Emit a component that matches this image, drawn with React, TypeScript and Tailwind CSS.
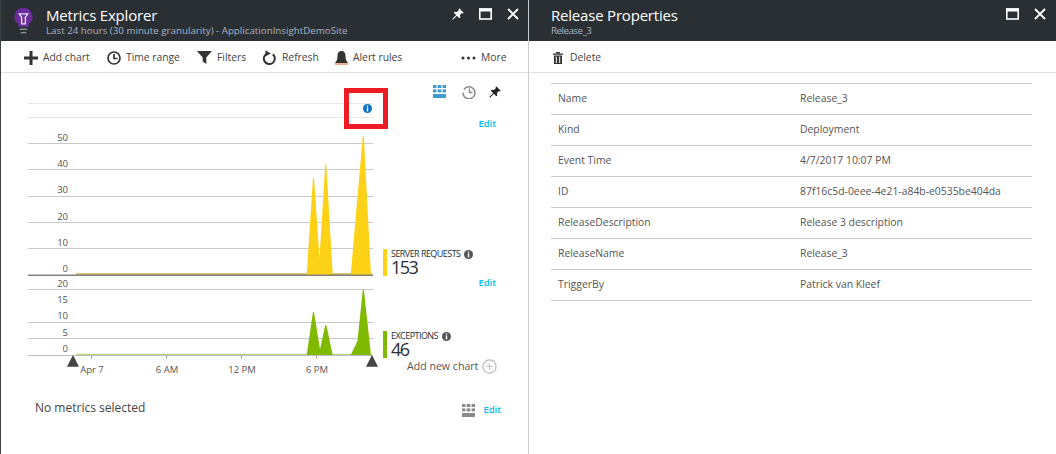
import React from "react";

function Pin({ color, className }: { color: string; className: string }) {
  return (
    <svg viewBox="0 0 12 12" className={className} fill={color}>
      <path d="M7.2 0.3 11.7 4.8 10.8 5.5 10 5 7.9 7.1 8.3 9.3 7.3 10.2 4.9 7.8 1 11.7 0.3 11 4.2 7.1 1.8 4.7 2.7 3.7 4.9 4.1 7 2 6.5 1.2z" />
    </svg>
  );
}

function Maximize() {
  return (
    <svg viewBox="0 0 13 12" className="w-[13px] h-[12px]">
      <rect x="0.8" y="1" width="11.4" height="10" fill="none" stroke="#fff" strokeWidth="1.6" />
      <rect x="0" y="0.500" width="13" height="3" fill="#fff" />
    </svg>
  );
}

function Close() {
  return (
    <svg viewBox="0 0 12 12" className="w-[12px] h-[12px]">
      <path d="M1 1 11 11M11 1 1 11" stroke="#fff" strokeWidth="1.8" />
    </svg>
  );
}

function Grid({ color }: { color: string }) {
  return (
    <svg viewBox="0 0 13 13" className="w-[13px] h-[13px]" fill={color}>
      <rect x="0" y="0" width="3.4" height="3" />
      <rect x="4.6" y="0" width="3.8" height="3" />
      <rect x="9.6" y="0" width="3.4" height="3" />
      <rect x="0" y="4.4" width="3.4" height="3" />
      <rect x="4.6" y="4.4" width="3.8" height="3" />
      <rect x="9.6" y="4.4" width="3.4" height="3" />
      <rect x="0" y="9" width="13" height="4" />
    </svg>
  );
}

function InfoDot({ color }: { color: string }) {
  return (
    <svg viewBox="0 0 9 9" className="w-[9px] h-[9px] shrink-0">
      <circle cx="4.5" cy="4.5" r="4.5" fill={color} />
      <rect x="3.8" y="1.4" width="1.4" height="1.3" fill="#fff" />
      <rect x="3.8" y="3.4" width="1.4" height="4" fill="#fff" />
    </svg>
  );
}

function Tool({ icon, label, className }: { icon: React.ReactNode; label: string; className: string }) {
  return (
    <div className={"flex items-center gap-[5px] " + className}>
      {icon}
      <span>{label}</span>
    </div>
  );
}

function Header({ title, sub, className, subClass }: { title: string; sub: string; className: string; subClass: string }) {
  return (
    <div className={"h-[41px] bg-[#2a2f34] shrink-0 pt-[5px] " + className}>
      <div className="text-[15px] leading-[20px] tracking-[-0.2px] text-white">{title}</div>
      <div className={"text-[9.750px] leading-[12px] text-[#a9b4c0] " + subClass}>{sub}</div>
    </div>
  );
}

function Charts() {
  const gridColor = "#c8c8c8";
  return (
    <svg viewBox="28 73 352 306" className="w-[352px] h-[306px] shrink-0" fontFamily="'Open Sans', sans-serif" fontSize="9.5" fill="#555">
      <path d="M28 103.500H373M28 117.500H373" stroke="#e6e6e6" />
      <path d="M28 143.500H373M28 169.500H373M28 196.500H373M28 222.500H373M28 248.500H373" stroke={gridColor} />
      <path d="M76 274H372" stroke="#c9b24a" strokeWidth="1.5" />
      <path d="M306.700 275 313 177.700H314L319.500 258 325.300 164.300H326.300L332.700 275ZM350.700 275 362.800 136H363.800L371 275Z" fill="#fcd116" />
      <path d="M28 275.200H373" stroke="#808080" strokeWidth="1.6" />
      {[["50", 140.7], ["40", 166.7], ["30", 193], ["20", 220], ["10", 246], ["0", 271.7]].map(([t, y]) => (
        <text key={t} x="68" y={y} textAnchor="end">{t}</text>
      ))}

      <path d="M28 289.500H373M28 322.500H373M28 338.500H373" stroke={gridColor} />
      <path d="M76 354.500H372" stroke="#b7d77c" strokeWidth="1.6" />
      <path d="M306.700 355 313 312H314L320 349.300 325.300 325H326.300L332.700 355ZM350.700 355 357.500 341 362.800 289.500H363.800L371 355Z" fill="#7fba00" />
      <path d="M28 355.500H373" stroke="#bdbdbd" />
      {[["20", 286.7], ["15", 303], ["10", 319.4], ["5", 335.7], ["0", 351.7]].map(([t, y]) => (
        <text key={"b" + t} x="68" y={y} textAnchor="end">{t}</text>
      ))}
      <path d="M91.500 356V359M166.500 356V359M241.500 356V359M316.500 356V359" stroke="#aaa" />
      {[["Apr 7", 92], ["6 AM", 167], ["12 PM", 242], ["6 PM", 317]].map(([t, x]) => (
        <text key={t} x={x} y="372.700" textAnchor="middle">{t}</text>
      ))}
      <path d="M73 355 79 366.700H67ZM372 355 378 366.700H366Z" fill="#444" />
    </svg>
  );
}

function Legend({ color, name, value, mt }: { color: string; name: string; value: string; mt: string }) {
  return (
    <div className={"flex gap-[4px] h-[27px] " + mt}>
      <div className="w-[4px] h-[27px]" style={{ background: color }} />
      <div className="text-[#2a2f34]">
        <div className="flex items-center gap-[4px] text-[9px] leading-[10px] tracking-[-0.55px] h-[10px]">
          {name}
          <InfoDot color="#555" />
        </div>
        <div className="text-[18px] leading-[17px] tracking-[-1.5px] font-medium">{value}</div>
      </div>
    </div>
  );
}

const props = [
  ["Name", "Release_3"],
  ["Kind", "Deployment"],
  ["Event Time", "4/7/2017 10:07 PM"],
  ["ID", "87f16c5d-0eee-4e21-a84b-e0535be404da"],
  ["ReleaseDescription", "Release 3 description"],
  ["ReleaseName", "Release_3"],
  ["TriggerBy", "Patrick van Kleef"],
];

export default function App() {
  return (
    <div className="w-[1056px] h-[454px] flex bg-white text-[#444] overflow-hidden" style={{ fontFamily: "'Open Sans', sans-serif" }}>
      {/* left blade */}
      <section className="w-[528px] h-full border-l-[1px] border-[#3c4045] flex flex-col relative shrink-0">
        <Header title="Metrics Explorer" sub="Last 24 hours (30 minute granularity) - ApplicationInsightDemoSite" className="pl-[45px]" subClass="" />
        <div className="absolute left-[13px] top-[7px]">
          <svg viewBox="0 0 20 28" className="w-[19px] h-[28px]">
            <path d="M10 0a9.500 9.500 0 0 1 5.500 17.200V20h-11v-2.800A9.500 9.500 0 0 1 10 0z" fill="#6b2d9b" />
            <path d="M5.500 6.500h9L12 10v7H8v-7z" fill="none" stroke="#e8dff0" strokeWidth="1.4" />
            <rect x="6" y="22" width="8" height="1.500" fill="#8a8f95" />
            <rect x="7" y="25.500" width="6" height="1.500" fill="#8a8f95" />
          </svg>
        </div>
        <div className="absolute top-[8px] left-[451px] flex items-center gap-[15px]">
          <Pin color="#fff" className="w-[12px] h-[12px]" />
          <Maximize />
          <Close />
        </div>
        <div className="h-[32px] pt-[2px] border-b border-[#e0e0e0] flex items-center text-[10.300px] text-[#444] pl-[23px] shrink-0">
          <Tool label="Add chart" className="w-[83px]" icon={
            <svg viewBox="0 0 14 14" className="w-[14px] h-[14px]" fill="#333"><path d="M5.500 0h3v5.500H14v3H8.500V14h-3V8.500H0v-3h5.500z" /></svg>
          } />
          <Tool label="Time range" className="w-[90px]" icon={
            <svg viewBox="0 0 14 14" className="w-[14px] h-[14px]" fill="none" stroke="#333" strokeWidth="1.7"><circle cx="7" cy="7" r="6" /><path d="M7 3v4.500h3.500" /></svg>
          } />
          <Tool label="Filters" className="w-[65px]" icon={
            <svg viewBox="0 0 15 13" className="w-[15px] h-[13px]" fill="#333"><path d="M0 0h15L9.300 6.500V13L5.700 10.500V6.500z" /></svg>
          } />
          <Tool label="Refresh" className="w-[73px]" icon={
            <svg viewBox="0 0 15 15" className="w-[15px] h-[15px]" fill="none" stroke="#333" strokeWidth="2">
              <path d="M10.800 4.300A5.500 5.500 0 1 1 5 3.600" />
              <path d="M3.500 0.300 8.800 3.600 3.200 6.600z" fill="#333" stroke="none" />
            </svg>
          } />
          <Tool label="Alert rules" className="w-[126px]" icon={
            <svg viewBox="0 0 13 14" className="w-[13px] h-[14px]" fill="#333"><path d="M6.500 0C9.500 0 10.500 2.500 10.500 5c0 3 .8 5 2.500 7H0c1.700-2 2.500-4 2.500-7C2.500 2.500 3.500 0 6.500 0z" /><rect x="0" y="12.500" width="13" height="1" fill="#e8601c" /></svg>
          } />
          <Tool label="More" className="" icon={
            <svg viewBox="0 0 15 4" className="w-[15px] h-[4px]" fill="#333"><circle cx="2" cy="2" r="1.500" /><circle cx="7.500" cy="2" r="1.500" /><circle cx="13" cy="2" r="1.500" /></svg>
          } />
        </div>
        <div className="flex pl-[27px]">
          <Charts />
          <div className="flex flex-col flex-1 pl-[3px]">
            <div className="flex items-center pl-[50px] pt-[12px] h-[25px]">
              <Grid color="#3e9bd0" />
              <svg viewBox="0 0 14 14" className="w-[14px] h-[14px] ml-[16px]" fill="none" stroke="#8a8a8a" strokeWidth="1.5"><path d="M2 4.500A6 6 0 1 1 1 7.500" /><path d="M7.500 3.500v4h3" /></svg>
              <Pin color="#222" className="w-[12px] h-[12px] ml-[13px]" />
            </div>
            <div className="text-[9.500px] font-semibold text-[#00bcf2] leading-[12px] text-right pr-[32px] mt-[20px]">Edit</div>
            <Legend color="#fcd116" name="SERVER REQUESTS" value="153" mt="mt-[119px]" />
            <div className="text-[9.500px] font-semibold text-[#00bcf2] leading-[12px] text-right pr-[32px] mt-[1px]">Edit</div>
            <Legend color="#7fba00" name="EXCEPTIONS" value="46" mt="mt-[42px]" />
            <div className="flex items-center text-[10.600px] text-[#555] pl-[24px] mt-[1px]">
              Add new chart
              <svg viewBox="0 0 16 16" className="w-[15px] h-[15px] ml-[4px]" fill="none" stroke="#bbb"><circle cx="8" cy="8" r="7" strokeWidth="1.300" /><path d="M8 4.500v7M4.500 8h7" /></svg>
            </div>
          </div>
        </div>
        <div className="flex items-center justify-between pl-[34px] pr-[27px] mt-[19px]">
          <span className="text-[12px] text-[#444]">No metrics selected</span>
          <div className="flex items-center gap-[8px] mt-[5px]">
            <Grid color="#8a8a8a" />
            <span className="text-[9.500px] font-semibold text-[#00bcf2]">Edit</span>
          </div>
        </div>
        {/* callout */}
        <div className="absolute left-[343px] top-[88px] w-[44px] h-[41px] border-[5px] border-[#ed1c24] flex items-center justify-center">
          <span className="ml-[2px]"><InfoDot color="#0f6fc6" /></span>
        </div>
      </section>

      {/* right blade */}
      <section className="flex-1 h-full border-l-[1px] border-[#c8ccd0] flex flex-col relative">
        <Header title="Release Properties" sub="Release_3" className="pl-[22px]" subClass="tracking-[-0.5px]" />
        <div className="absolute top-[8px] left-[477px] flex items-center gap-[15px]">
          <Maximize />
          <Close />
        </div>
        <div className="h-[32px] pt-[2px] border-b border-[#e0e0e0] flex items-center text-[10.300px] pl-[24px] shrink-0">
          <svg viewBox="0 0 10 12" className="w-[10px] h-[12px] mr-[7px]" fill="#333"><rect x="0" y="1.500" width="10" height="1.300" /><rect x="3" y="0" width="4" height="1.500" /><path d="M1 3.500h8V12H1zM2.800 4.500V11h1V4.500zM6.200 4.500V11h1V4.500z" fillRule="evenodd" /></svg>
          Delete
        </div>
        <div className="ml-[22px] mt-[10px] w-[481px] border-t border-[#c8c8c8]">
          {props.map(([k, v]) => (
            <div key={k} className="h-[31px] border-b border-[#c8c8c8] flex items-center text-[10.400px] text-[#555] pl-[7px]">
              <span className="w-[242px]">{k}</span>
              <span>{v}</span>
            </div>
          ))}
        </div>
      </section>
    </div>
  );
}
